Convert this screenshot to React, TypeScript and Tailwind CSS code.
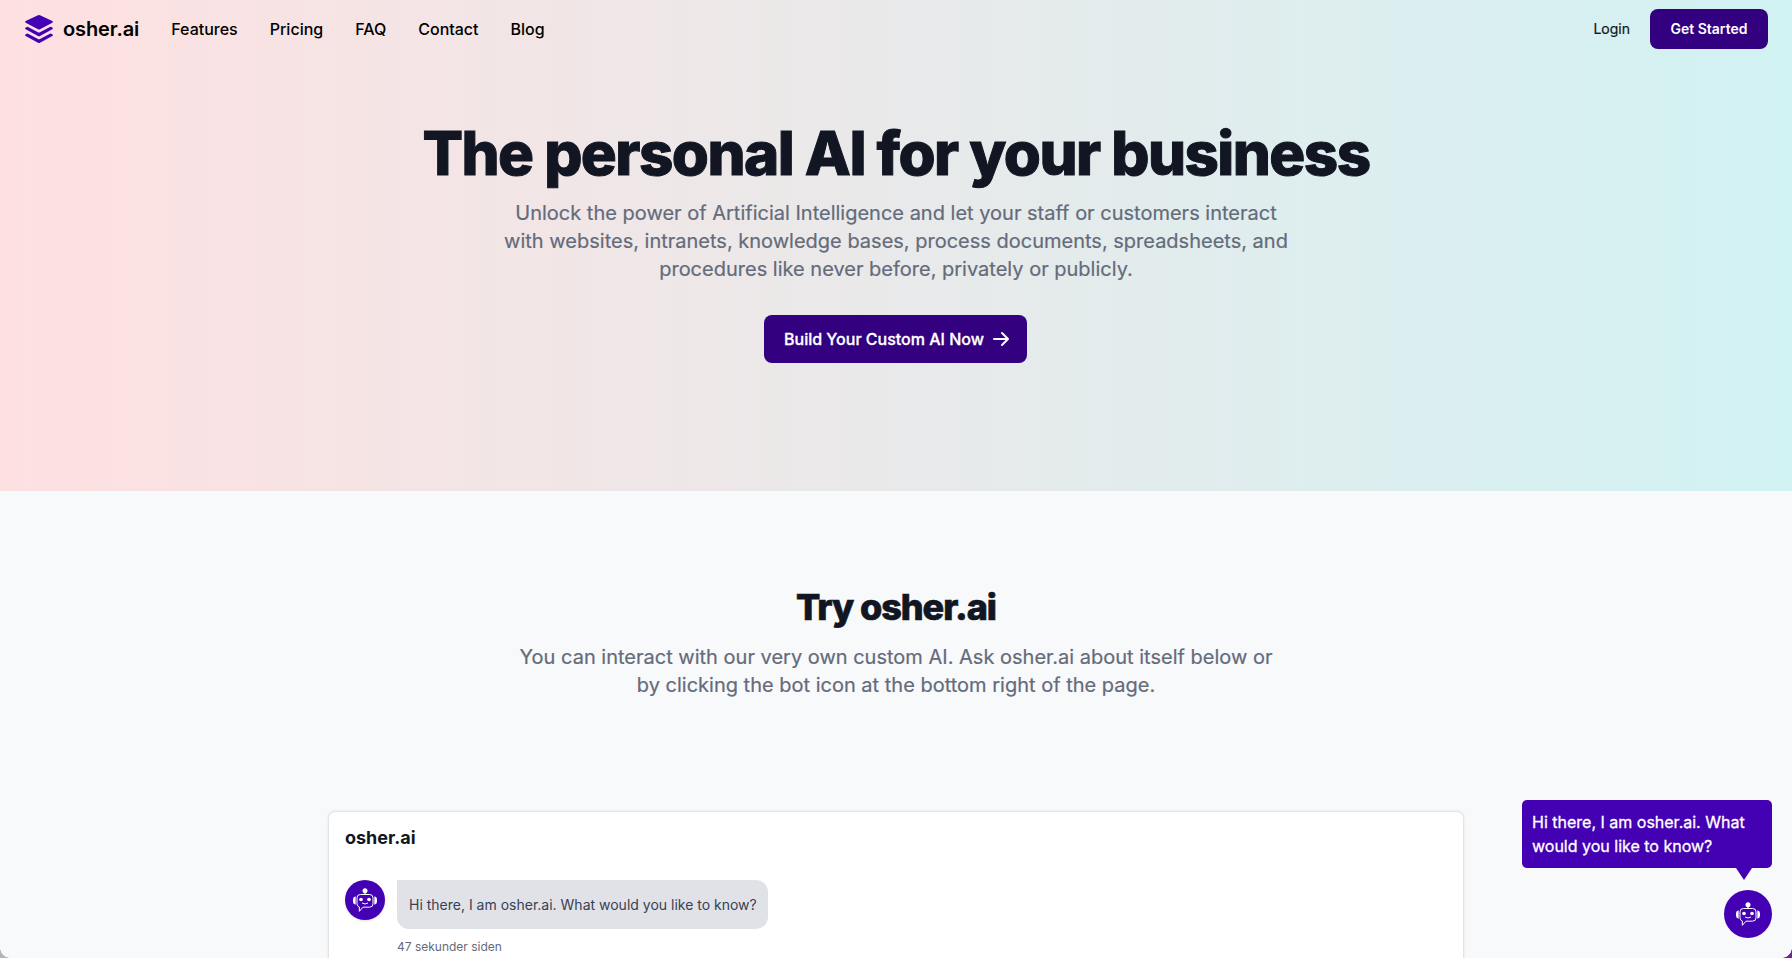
function LayersLogo() {
  return (
    <svg className="size-7 text-[#4400b3]" viewBox="0 0 28 28" fill="currentColor" aria-hidden="true">
      <path d="M13 .3q1-.5 2 0L27.300 6q1.200.8 0 1.700L15 14.200q-1 .5-2 0L.7 7.700q-1.200-.9 0-1.700z" />
      <path d="M.7 12.600 2.600 11.700 13 17.200q1 .5 2 0L25.400 11.700 27.300 12.600q1.200.8 0 1.700L15 21q-1 .5-2 0L.7 14.300q-1.200-.9 0-1.700z" />
      <path d="M.7 19.300 2.600 18.400 13 23.900q1 .5 2 0L25.400 18.400 27.300 19.300q1.200.8 0 1.700L15 27.700q-1 .5-2 0L.7 21q-1.200-.9 0-1.700z" />
    </svg>
  );
}

function Robot() {
  return (
    <svg className="size-6 text-white" viewBox="0 0 72 72" fill="none" stroke="currentColor" strokeWidth="3" aria-hidden="true">
      <circle cx="36" cy="8" r="7.500" fill="currentColor" stroke="none" />
      <path d="M36 12v8" strokeWidth="4" />
      <path d="M30 57.500H50q10 0 10-10V29.500q0-10-10-10H22q-10 0-10 10v18q0 7 7 9.500v13z" strokeLinejoin="round" />
      <path d="M8 25v25Q0 48 0 41v-7q0-7 8-9zM64 25v25q8-2 8-9v-7q0-7-8-9z" fill="currentColor" stroke="none" />
      <circle cx="24" cy="34.500" r="5.500" fill="currentColor" stroke="none" />
      <circle cx="48" cy="34.500" r="5.500" fill="currentColor" stroke="none" />
      <path d="M27 45q9 6 18 0" />
    </svg>
  );
}

const links = ["Features", "Pricing", "FAQ", "Contact", "Blog"];

export default function App() {
  return (
    <div className="relative h-[958px] overflow-hidden bg-[#f8f9fb] font-['Inter',sans-serif] text-[#111622]">
      <div className="h-[491px] bg-linear-to-r from-[#fee0e1] to-[#d1f2f3]">
        <header className="flex h-[58px] items-center justify-between pr-6 pl-[25px]">
          <div className="flex items-center">
            <LayersLogo />
            <span className="ml-[10px] text-xl font-semibold tracking-[-0.1px] text-black">osher.ai</span>
            <nav className="ml-8 flex gap-8 text-base font-medium text-black">
              {links.map((l) => (
                <a key={l} href="#">{l}</a>
              ))}
            </nav>
          </div>
          <div className="flex items-center gap-5 text-sm">
            <a href="#" className="[-webkit-text-stroke:0.2px]">Login</a>
            <a href="#" className="flex h-10 w-[118px] items-center justify-center rounded-lg bg-[#330080] font-semibold text-white">
              Get Started
            </a>
          </div>
        </header>
        <main className="flex flex-col items-center pt-[65px] text-center">
          <h1 className="text-6xl leading-[60px] font-extrabold tracking-[-1.55px] [-webkit-text-stroke:1px]">The personal AI for your business</h1>
          <p className="mt-4 text-xl leading-7 text-[#646b7a] [-webkit-text-stroke:0.2px]">
            Unlock the power of Artificial Intelligence and let your staff or customers interact
            <br />
            with websites, intranets, knowledge bases, process documents, spreadsheets, and
            <br />
            procedures like never before, privately or publicly.
          </p>
          <a href="#" className="mt-8 mr-px flex h-12 w-[263px] items-center gap-[7px] rounded-lg bg-[#330080] pl-5 font-medium whitespace-nowrap text-white">
            <span className="[-webkit-text-stroke:0.3px]">Build Your Custom AI Now</span>
            <svg className="size-5" viewBox="0 0 20 20" fill="currentColor" aria-hidden="true">
              <path fillRule="evenodd" clipRule="evenodd" d="M10.293 3.293a1 1 0 011.414 0l6 6a1 1 0 010 1.414l-6 6a1 1 0 01-1.414-1.414L14.586 11H3a1 1 0 110-2h11.586l-4.293-4.293a1 1 0 010-1.414z" />
            </svg>
          </a>
        </main>
      </div>
      <section className="flex flex-col items-center pt-24 text-center">
        <h2 className="text-4xl leading-10 font-extrabold tracking-[-1.05px] [-webkit-text-stroke:0.7px]">Try osher.ai</h2>
        <p className="mt-4 text-xl leading-7 text-[#646b7a] [-webkit-text-stroke:0.2px]">
          You can interact with our very own custom AI. Ask osher.ai about itself below or
          <br />
          by clicking the bot icon at the bottom right of the page.
        </p>
        <div className="mt-[113px] h-[180px] w-[1134px] rounded-md bg-white px-4 pt-3 text-left shadow-[0_0_3px_rgba(0,0,0,0.24)]">
          <h3 className="text-lg leading-7 font-bold">osher.ai</h3>
          <div className="mt-7 flex gap-3">
            <div className="flex size-10 shrink-0 items-center justify-center rounded-full bg-[#4400b3] shadow-sm">
              <Robot />
            </div>
            <div>
              <div className="flex h-[49px] w-[371px] items-center rounded-xl rounded-tl-none bg-[#e1e2e8] px-3 text-sm whitespace-nowrap text-[#374151]">
                Hi there, I am osher.ai. What would you like to know?
              </div>
              <div className="mt-2.5 text-xs leading-4 text-[#646b7a]">47 sekunder siden</div>
            </div>
          </div>
        </div>
      </section>
      <aside className="absolute top-[800px] right-5 flex w-[250px] flex-col items-end">
        <div className="h-[68px] w-full rounded-[5px] bg-[#4400b3] px-2.5 pt-2.5 text-base leading-6 text-white [-webkit-text-stroke:0.3px]">
          Hi there, I am osher.ai. What would you like to know?
        </div>
        <div className="mr-5 size-0 border-x-8 border-t-[12px] border-x-transparent border-t-[#4400b3]" />
        <div className="mt-2.5 flex size-12 items-center justify-center rounded-full bg-[#4400b3]">
          <Robot />
        </div>
      </aside>
      <div className="absolute bottom-0 left-0 size-2.5 bg-[radial-gradient(circle_at_100%_0,transparent_9.5px,#b5b5b5_10px)]" />
      <div className="absolute right-0 bottom-0 size-2.5 bg-[radial-gradient(circle_at_0_0,transparent_9.5px,#7b219f_10px)]" />
    </div>
  );
}
